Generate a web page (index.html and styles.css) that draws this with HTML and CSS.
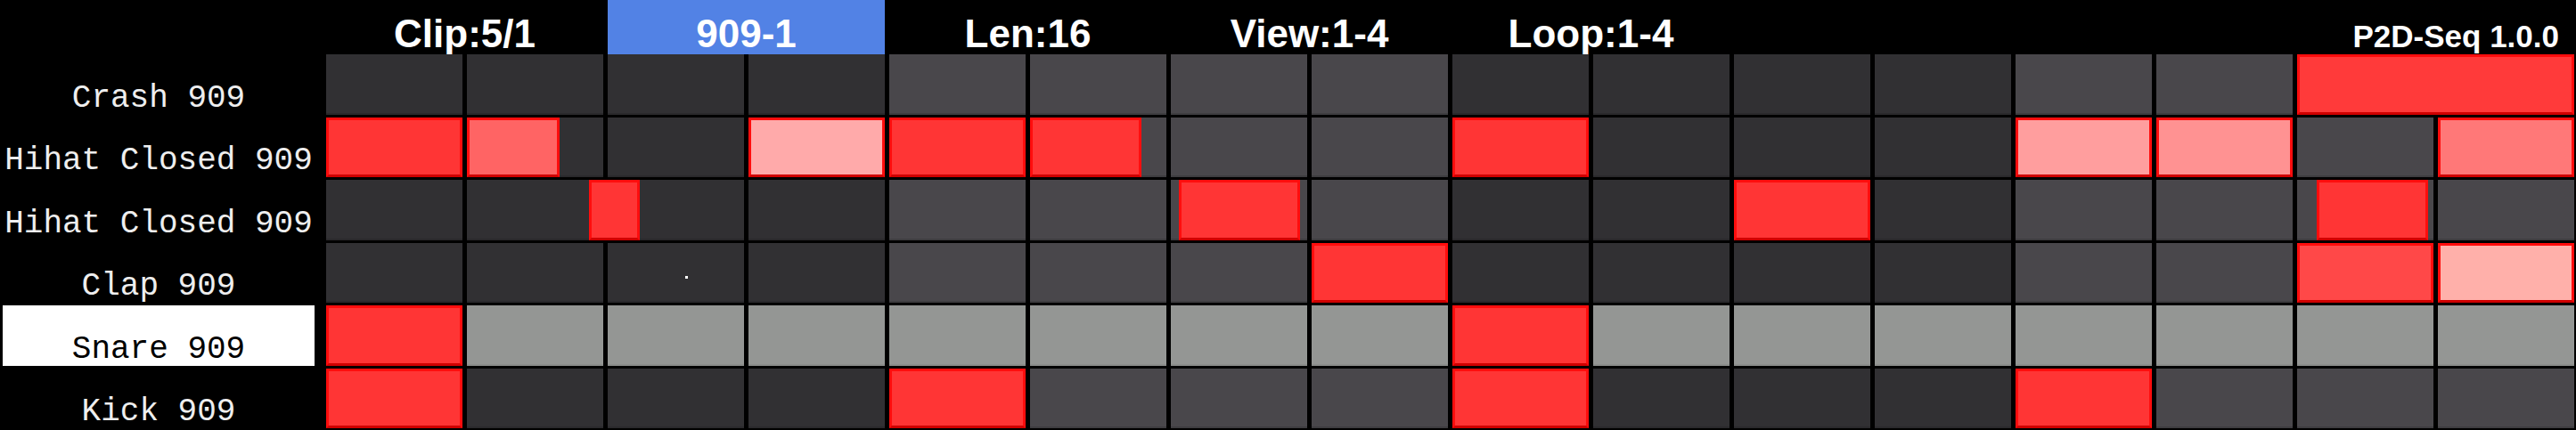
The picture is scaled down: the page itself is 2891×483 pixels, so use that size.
FILE: index.html
```html
<!DOCTYPE html>
<html lang="en">
<head>
  <meta charset="UTF-8">
  <title>P2D-Seq</title>
  <link rel="stylesheet" href="styles.css">
</head>
<body>
  <div class="seq">
    <div class="corner"></div>
    <div class="topbar">
      <div class="tab">Clip:5/1</div>
      <div class="tab active">909-1</div>
      <div class="tab">Len:16</div>
      <div class="tab">View:1-4</div>
      <div class="tab">Loop:1-4</div>
      <div class="tab"></div>
      <div class="tab"></div>
      <div class="tab version">P2D-Seq 1.0.0</div>
    </div>
    <div class="labels" id="labels"></div>
    <div class="tracks" id="tracks"></div>
  </div>

  <script>
    // [start step, length in steps, fill colour from velocity]
    const RED = '#ff3535';
    const tracks = [
      { name: 'Crash 909', notes: [[14, 2, '#ff3a3a']] },
      { name: 'Hihat Closed 909', notes: [
        [0, 1, RED], [1, 0.69, '#ff6464'], [3, 1, '#ffaaaa'], [4, 1, RED], [5, 0.82, RED],
        [8, 1, RED], [12, 1, '#ff9e9e'], [13, 1, '#ff9292'], [15, 1, '#ff7878']
      ] },
      { name: 'Hihat Closed 909', notes: [[1.87, 0.39, RED], [6.06, 0.89, RED], [10, 1, RED], [14.14, 0.82, RED]] },
      { name: 'Clap 909', cursor: true, notes: [[7, 1, RED], [14, 1, '#ff4848'], [15, 1, '#ffb0aa']] },
      { name: 'Snare 909', selected: true, notes: [[0, 1, RED], [8, 1, RED]] },
      { name: 'Kick 909', notes: [[0, 1, RED], [4, 1, RED], [8, 1, RED], [12, 1, RED]] }
    ];

    const labels = document.getElementById('labels');
    const rows = document.getElementById('tracks');

    tracks.forEach(t => {
      const label = document.createElement('div');
      label.className = 'label' + (t.selected ? ' selected' : '');
      label.textContent = t.name;
      labels.appendChild(label);

      const row = document.createElement('div');
      row.className = 'track' + (t.selected ? ' selected' : '');
      for (let i = 0; i < 16; i++) {
        const cell = document.createElement('div');
        cell.className = 'cell' + (Math.floor(i / 4) % 2 ? ' beat' : '');
        row.appendChild(cell);
      }
      t.notes.forEach(([start, len, fill]) => {
        const note = document.createElement('div');
        note.className = 'note';
        note.style.setProperty('--start', start);
        note.style.setProperty('--len', len);
        note.style.setProperty('--fill', fill);
        row.appendChild(note);
      });
      if (t.cursor) {
        const dot = document.createElement('div');
        dot.className = 'cursor';
        row.appendChild(dot);
      }
      rows.appendChild(row);
    });
  </script>
</body>
</html>
```

FILE: styles.css
```css
body {
  margin: 0;
  background: #000;
  overflow: hidden;
}
.seq {
  display: grid;
  grid-template-columns: 366px 2523px;
  grid-template-rows: 61px 420px;
}
.topbar {
  display: grid;
  grid-template-columns: repeat(8, 1fr);
  column-gap: 5px;
}
.tab {
  display: flex;
  align-items: flex-end;
  justify-content: center;
  padding-bottom: 1px;
  font: bold 44px/44px "Liberation Sans", Arial, sans-serif;
  color: #fff;
}
.tab.active {
  background: #5282e5;
}
.tab.version {
  justify-content: flex-end;
  padding-right: 17px;
  padding-bottom: 3px;
  font-size: 35px;
  line-height: 35px;
}
.labels {
  display: grid;
  grid-template-rows: repeat(6, 1fr);
  row-gap: 3px;
  width: 350px;
  padding-left: 3px;
}
.label {
  display: flex;
  align-items: flex-end;
  justify-content: center;
  font: 36px/36px "Liberation Mono", "Courier New", monospace;
  color: #eee;
  white-space: nowrap;
}
.label.selected {
  background: #fff;
  color: #000;
}
.tracks {
  display: grid;
  grid-template-rows: repeat(6, 1fr);
  row-gap: 3px;
}
.track {
  position: relative;
  display: grid;
  grid-template-columns: repeat(16, 1fr);
  column-gap: 5px;
}
.cell {
  background: #313033;
  border-bottom: 2px solid #2a292c;
}
.cell.beat {
  background: #49474b;
  border-bottom-color: #3e3d40;
}
.track.selected .cell {
  background: #949694;
  border-bottom-color: #8b8d8b;
}
.note {
  position: absolute;
  top: 0;
  bottom: 0;
  left: calc(var(--start) * (100% + 5px) / 16);
  width: calc(var(--len) * (100% + 5px) / 16 - 5px);
  box-sizing: border-box;
  background: var(--fill);
  border: 3px solid #ff0d0d;
  border-bottom-color: #d00000;
}
.cursor {
  position: absolute;
  left: 403px;
  top: 37px;
  width: 3px;
  height: 3px;
  background: #fff;
}
```
